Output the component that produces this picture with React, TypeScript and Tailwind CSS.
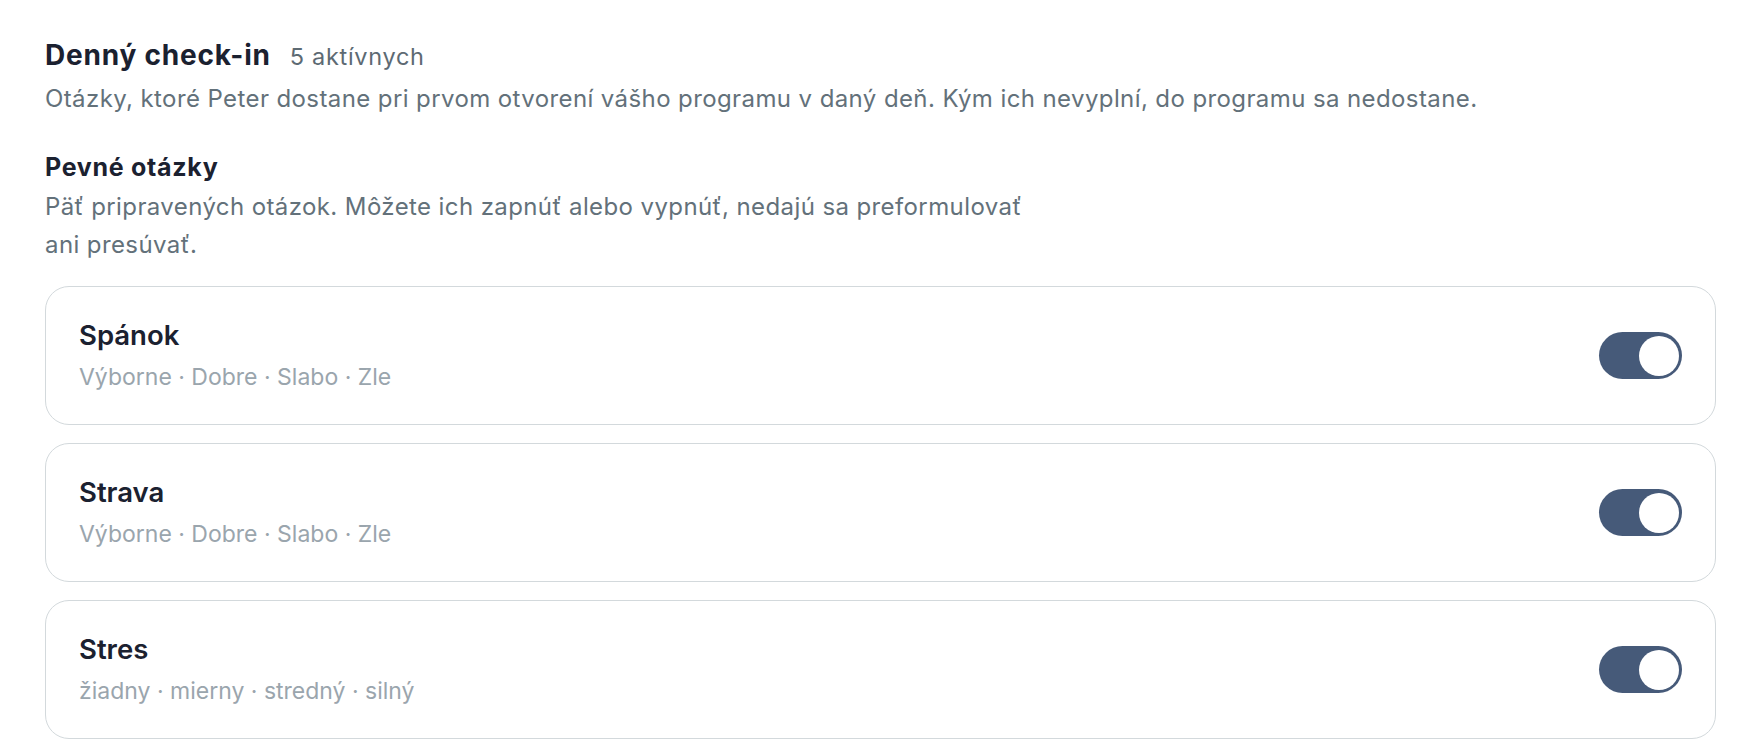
import { useState } from "react";

type Question = {
  id: string;
  title: string;
  options: string[];
};

const questions: Question[] = [
  { id: "sleep", title: "Spánok", options: ["Výborne", "Dobre", "Slabo", "Zle"] },
  { id: "food", title: "Strava", options: ["Výborne", "Dobre", "Slabo", "Zle"] },
  { id: "stress", title: "Stres", options: ["žiadny", "mierny", "stredný", "silný"] },
];

const Toggle = ({ on, onChange }: { on: boolean; onChange: () => void }) => (
  <button
    type="button"
    onClick={onChange}
    className={`relative h-[47px] w-[83px] shrink-0 rounded-full transition-colors ${
      on ? "bg-[#465a79]" : "bg-[#d5dbde]"
    }`}
  >
    <span
      className={`absolute top-[3.5px] h-[40px] w-[40px] rounded-full bg-white transition-all ${
        on ? "left-[40px]" : "left-[3.5px]"
      }`}
    />
  </button>
);

const App: React.FC = () => {
  const [enabled, setEnabled] = useState<Record<string, boolean>>({
    sleep: true,
    food: true,
    stress: true,
  });

  return (
    <div
      className="min-h-screen bg-white pl-[45px] pr-[36px] pt-[37px]"
      style={{ fontFamily: "Inter, 'Noto Sans', sans-serif" }}
    >
      <div className="flex items-baseline gap-[19px]">
        <h2 className="text-[28px] font-bold leading-[36px] tracking-[0.8px] text-[#1b2130]">
          Denný check-in
        </h2>
        <span className="text-[23.5px] tracking-[0.7px] text-[#5d6a73]">5 aktívnych</span>
      </div>
      <p className="mt-[9px] text-[24px] leading-[32px] tracking-[0.4px] text-[#63717a]">
        Otázky, ktoré Peter dostane pri prvom otvorení vášho programu v daný deň. Kým ich
        nevyplní, do programu sa nedostane.
      </p>

      <h3 className="mt-[36px] text-[25px] font-bold leading-[32px] tracking-[0.7px] text-[#1b2130]">
        Pevné otázky
      </h3>
      <p className="mt-[5px] max-w-[1000px] text-[24px] leading-[38px] tracking-[0.4px] text-[#63717a]">
        Päť pripravených otázok. Môžete ich zapnúť alebo vypnúť, nedajú sa preformulovať
        ani presúvať.
      </p>

      <div className="mt-[22px] flex flex-col gap-[18px]">
        {questions.map((q) => (
          <div
            key={q.id}
            className="flex h-[139px] items-center justify-between rounded-[24px] border border-[#d3d9dc] bg-white pl-[33px] pr-[33px]"
          >
            <div>
              <div className="text-[27.5px] font-semibold leading-[32px] text-[#1b2130]">
                {q.title}
              </div>
              <div className="mt-[11px] text-[23px] leading-[30px] text-[#9aa5ad]">
                {q.options.join(" · ")}
              </div>
            </div>
            <Toggle
              on={enabled[q.id]}
              onChange={() => setEnabled((s) => ({ ...s, [q.id]: !s[q.id] }))}
            />
          </div>
        ))}
      </div>
    </div>
  );
};

export default App;
